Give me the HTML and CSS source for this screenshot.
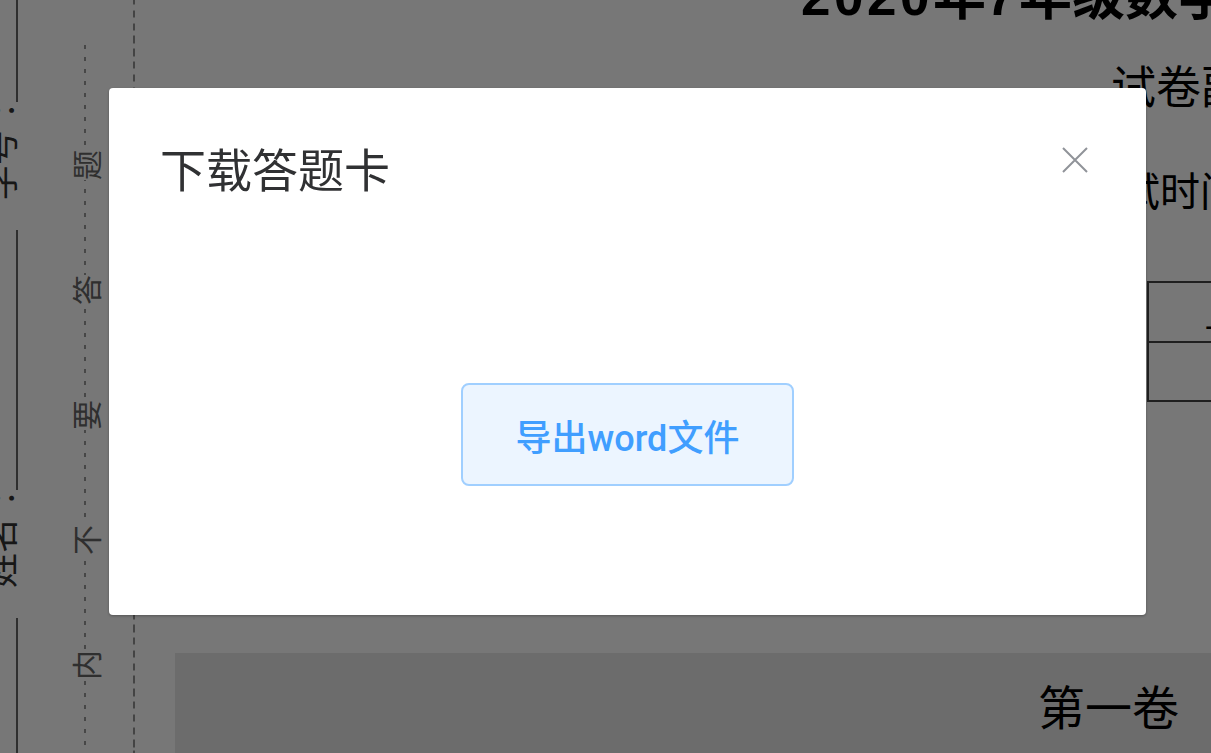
FILE: index.html
```html
<!DOCTYPE html>
<html lang="zh-CN">
<head>
<meta charset="utf-8">
<title>下载答题卡</title>
<link rel="stylesheet" href="styles.css">
</head>
<body>
<div class="sheet">
  <div class="binding">
    <div class="info-strip">
      <div class="info-row">
        <span class="blank blank-tail"></span>
        <span class="label">姓名</span><span class="colon">:</span>
        <span class="blank blank-long"></span>
        <span class="label">学号</span><span class="colon">:</span>
        <span class="blank blank-long"></span>
      </div>
    </div>
    <div class="seal-strip">
      <div class="seal-line">
        <span class="seal-char">题</span>
        <span class="seal-char">答</span>
        <span class="seal-char">要</span>
        <span class="seal-char">不</span>
        <span class="seal-char">内</span>
        <span class="seal-char">线</span>
        <span class="seal-char">封</span>
        <span class="seal-char">密</span>
      </div>
    </div>
    <div class="fold-line"></div>
  </div>

  <main class="paper">
    <h1 class="paper-title"><span class="num">2020</span>年<span class="num">7</span>年级数学期末考试试卷</h1>
    <p class="paper-subtitle">试卷副标题</p>
    <p class="paper-meta">考试时间：120分钟　满分：150分</p>
    <table class="score-table">
      <tr><td class="score-head">一</td><td></td><td></td></tr>
      <tr><td></td><td></td><td></td></tr>
    </table>
    <section class="volume">
      <h2 class="volume-title">第一卷</h2>
    </section>
  </main>
</div>

<div class="modal-mask">
  <div class="dialog" role="dialog" aria-label="下载答题卡">
    <div class="dialog-header">
      <span class="dialog-title">下载答题卡</span>
      <button class="dialog-close" aria-label="关闭">
        <svg viewBox="0 0 26 26" width="26" height="26"><path d="M1 1 L25 25 M25 1 L1 25" stroke="#909399" stroke-width="2" fill="none"/></svg>
      </button>
    </div>
    <div class="dialog-body">
      <button class="export-btn">导出word文件</button>
    </div>
  </div>
</div>
</body>
</html>
```

FILE: styles.css
```css
html, body {
  margin: 0;
  padding: 0;
  height: 100%;
  overflow: hidden;
  background: #ffffff;
}

body {
  font-family: "Liberation Sans", "Noto Sans CJK SC", sans-serif;
  color: #000;
}

.sheet {
  display: flex;
  height: 753px;
}

.binding {
  display: flex;
  flex-shrink: 0;
  height: 753px;
}

/* rotated name / number strip */
.info-strip {
  width: 18px;
  height: 753px;
  overflow: visible;
}

.info-row {
  display: flex;
  align-items: flex-end;
  width: 900px;
  height: 18px;
  transform-origin: 0 0;
  transform: translateY(753px) rotate(-90deg);
  font-family: "Noto Sans CJK SC", sans-serif;
  color: #333;
}

.blank {
  display: block;
  height: 2px;
  background: #666;
  flex-shrink: 0;
}

.blank-tail { width: 135px; }
.blank-long { width: 260px; margin-left: 3px; }

.label {
  display: block;
  font-size: 35px;
  line-height: 35px;
  margin-left: 30px;
  margin-bottom: 2px;
  white-space: nowrap;
}

.colon {
  display: block;
  font-size: 35px;
  line-height: 35px;
  margin-left: 15px;
  margin-bottom: 2px;
}

/* seal line */
.seal-strip {
  margin-left: 52px;
  width: 30px;
  padding-top: 45px;
  box-sizing: border-box;
  height: 753px;
}

.seal-line {
  height: 100%;
  display: flex;
  flex-direction: column;
  align-items: center;
  gap: 95px;
  padding-top: 105px;
  box-sizing: border-box;
  background-image: repeating-linear-gradient(to bottom, #999999 0 4px, transparent 4px 12px);
  background-size: 2px 100%;
  background-position: 14px 0;
  background-repeat: no-repeat;
}

.seal-char {
  display: block;
  width: 30px;
  height: 30px;
  flex-shrink: 0;
  font-family: "Noto Sans CJK SC", sans-serif;
  font-size: 30px;
  line-height: 30px;
  text-align: center;
  color: #666666;
  background: #ffffff;
  transform: rotate(-90deg);
}

.fold-line {
  margin-left: 33px;
  width: 2px;
  height: 753px;
  background-image: repeating-linear-gradient(to bottom, #929292 0 7.5px, transparent 7.5px 12.8px);
  background-position: 0 -2.5px;
}

/* paper */
.paper {
  flex: 1;
  min-width: 0;
  padding-left: 40px;
}

.paper-title {
  margin: -30px 0 0;
  padding-left: 626px;
  font-size: 53px;
  line-height: 53px;
  font-weight: 700;
  white-space: nowrap;
}

.paper-title .num {
  letter-spacing: 3.5px;
}

.paper-subtitle {
  margin: 32px 0 0;
  padding-left: 936px;
  font-family: "Noto Sans CJK SC", sans-serif;
  font-size: 45px;
  line-height: 60px;
  white-space: nowrap;
}

.paper-meta {
  margin: 44px 0 0;
  padding-left: 905px;
  font-family: "Noto Sans CJK SC", sans-serif;
  font-size: 40px;
  line-height: 60px;
  white-space: nowrap;
}

.score-table {
  margin: 62px 0 0 972px;
  border-collapse: collapse;
  border: 2px solid #444;
}

.score-table td {
  width: 200px;
  height: 57px;
  padding: 0;
  border: 2px solid #444;
  box-sizing: border-box;
}

.score-table tr { height: 59px; }

.score-head {
  font-family: "Noto Sans CJK SC", sans-serif;
  font-size: 30px;
  line-height: 30px;
  padding: 28px 0 0 56px !important;
  vertical-align: middle;
}

.volume {
  margin-top: 251px;
  height: 200px;
  background: #e7e7e7;
  padding-top: 22px;
  box-sizing: border-box;
}

.volume-title {
  margin: 0;
  padding-left: 863px;
  font-family: "Noto Sans CJK SC", sans-serif;
  font-size: 47px;
  line-height: 60px;
  font-weight: 400;
  white-space: nowrap;
}

/* modal */
.modal-mask {
  position: fixed;
  inset: 0;
  background: rgba(0, 0, 0, 0.533);
}

.dialog {
  margin: 88px 0 0 109px;
  width: 1037px;
  background: #ffffff;
  border-radius: 4px;
  box-shadow: 0 1px 3px rgba(0, 0, 0, 0.3);
}

.dialog-header {
  display: flex;
  justify-content: space-between;
  align-items: flex-start;
  padding: 49px 58px 0 51px;
}

.dialog-title {
  font-family: "Noto Sans CJK SC", sans-serif;
  font-size: 46px;
  line-height: 60px;
  color: #303133;
}

.dialog-close {
  margin-top: 10px;
  width: 26px;
  height: 26px;
  padding: 0;
  border: 0;
  background: transparent;
  display: flex;
}

.dialog-body {
  display: flex;
  justify-content: center;
  padding: 186px 0 129px;
}

.export-btn {
  width: 333px;
  height: 103px;
  box-sizing: border-box;
  display: flex;
  align-items: center;
  justify-content: center;
  border: 2px solid #a0cfff;
  border-radius: 8px;
  background: #ecf5ff;
  color: #409eff;
  font-family: "Roboto", "Noto Sans CJK SC", sans-serif;
  font-size: 36px;
  font-weight: 500;
  padding: 0;
}
```
